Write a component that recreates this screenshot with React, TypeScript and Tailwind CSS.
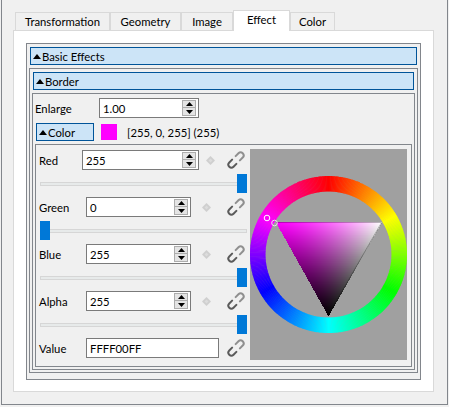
import React from 'react';

const tabs = [
  {label: 'Transformation', width: 'w-[95px]'},
  {label: 'Geometry', width: 'w-[71px]'},
  {label: 'Image', width: 'w-[52px]'},
  {label: 'Effect', width: 'w-[57px]', active: true},
  {label: 'Color', width: 'w-[45px]'},
];

const Arrow = (): React.JSX.Element => (
  <svg width="8" height="5" viewBox="0 0 8 5" className="shrink-0">
    <polygon points="4,0 8,5 0,5" fill="#000" />
  </svg>
);

const Header = ({label, className}: {label: string; className: string}): React.JSX.Element => (
  <div className={`flex h-[18px] items-center gap-[1px] border border-[#005499] bg-[#cce4f7] pl-[2px] ${className}`}>
    <Arrow />
    <span className="pt-[2px]">{label}</span>
  </div>
);

const Spin = (): React.JSX.Element => (
  <div className="flex h-[16px] w-[14px] shrink-0 flex-col border border-[#adadad] bg-[#e4e4e4]">
    <div className="flex h-[7px] items-center justify-center border-b border-[#adadad]">
      <svg width="7" height="4" viewBox="0 0 7 4">
        <polygon points="3.5,0 7,4 0,4" fill="#000" />
      </svg>
    </div>
    <div className="flex grow items-center justify-center">
      <svg width="7" height="4" viewBox="0 0 7 4">
        <polygon points="0,0 7,0 3.5,4" fill="#000" />
      </svg>
    </div>
  </div>
);

const SpinInput = ({value, width}: {value: string; width: string}): React.JSX.Element => (
  <div className={`flex h-[20px] shrink-0 items-center justify-between border border-[#7a7a7a] bg-white pr-[2px] pl-[3px] ${width}`}>
    <span className="pt-px">{value}</span>
    <Spin />
  </div>
);

const Diamond = ({className}: {className: string}): React.JSX.Element => (
  <svg width="9" height="9" viewBox="0 0 9 9" className={`shrink-0 ${className}`}>
    <polygon points="4.5,0 9,4.5 4.5,9 0,4.5" fill="#cfcfcf" />
    <polygon points="4.5,2.5 6.5,4.5 4.5,6.5 2.5,4.5" fill="#dcdcdc" />
  </svg>
);

const LinkIcon = (): React.JSX.Element => (
  <svg width="18" height="18" viewBox="0 0 18 18" fill="none" strokeWidth="2" strokeLinecap="round" className="mr-[3px] ml-auto shrink-0">
    <g transform="rotate(-45 9 9)">
      <path d="M6.5 6 H2.5 a3 3 0 0 0 0 6 H6.5" stroke="#5a5a5a" />
      <path d="M11.5 6 H15.5 a3 3 0 0 1 0 6 H11.5" stroke="#8f8f8f" />
    </g>
  </svg>
);

const Slider = ({right}: {right?: boolean}): React.JSX.Element => (
  <div className={`relative mt-[4px] ml-[4px] flex h-[19px] w-[207px] items-center ${right ? 'justify-end' : 'justify-start'}`}>
    <div className="h-[4px] w-full border border-[#d6d6d6] bg-[#e7eaea]" />
    <div className="absolute h-[19px] w-[10px] bg-[#0078d7]" />
  </div>
);

const Row = ({label, value, first}: {label: string; value: string; first?: boolean}): React.JSX.Element => (
  <div className="flex h-[20px] items-center pl-[3px]">
    <span className={first ? 'w-[43px] shrink-0 pt-px' : 'w-[47px] shrink-0 pt-px'}>{label}</span>
    <SpinInput value={value} width={first ? 'w-[117px]' : 'w-[105px]'} />
    <Diamond className={first ? 'ml-[7px]' : 'ml-[11px]'} />
    <LinkIcon />
  </div>
);

const arcPath = (start: number, end: number, r: number): string => {
  const cx = 78.5;
  const cy = 105.5;
  const a = ((start - 90) * Math.PI) / 180;
  const b = ((end - 90) * Math.PI) / 180;
  return `M${cx + r * Math.cos(a)} ${cy + r * Math.sin(a)} A${r} ${r} 0 0 1 ${cx + r * Math.cos(b)} ${cy + r * Math.sin(b)}`;
};

const hue = Array.from({length: 360}, (_, i) => i);

// triangle pixels: magenta top left, white top right, black at the bottom
const triCells: {x: number; y: number; fill: string}[] = [];
for (let row = 0; row < 94; row++) {
  const t = row / 93;
  const left = Math.round(26 + 52 * t);
  const right = Math.round(131 - 53 * t);
  const k = 255 * Math.pow(1 - t, 1.15);
  for (let x = left; x <= right; x++) {
    const s = right > left ? (x - left) / (right - left) : 0;
    const g = Math.round(k * Math.pow(s, 1.35));
    const v = Math.round(k);
    triCells.push({x, y: 73 + row, fill: `rgb(${v},${g},${v})`});
  }
}

const ColorWheel = (): React.JSX.Element => (
  <div className="mt-[4px] h-[211px] w-[157px] shrink-0 bg-[#a0a0a0]">
    <svg width="157" height="211" viewBox="0 0 157 211">
      {hue.map((h) => (
        <path key={h} d={arcPath(h - 0.7, h + 0.7, 70.75)} stroke={`hsl(${h} 100% 50%)`} strokeWidth="15.5" fill="none" />
      ))}
      <g shapeRendering="crispEdges">
        {triCells.map((c) => (
          <rect key={`${c.x}-${c.y}`} x={c.x} y={c.y} width="1" height="1" fill={c.fill} />
        ))}
      </g>
      <path d="M26 73.5 H131.5 L78 167" fill="none" stroke="#000" strokeOpacity="0.35" strokeWidth="0.8" />
      <circle cx="17" cy="69" r="2.8" fill="none" stroke="#fff" strokeWidth="1" />
      <circle cx="24.5" cy="74" r="2.8" fill="none" stroke="#e8e8e8" strokeWidth="1" />
    </svg>
  </div>
);

export default function App(): React.JSX.Element {
  return (
    <div className="h-[407px] w-[449px] bg-[#f0f0f0] font-['Lato',sans-serif] text-[11.3px] leading-none text-black">
      <div className="ml-px h-[405px] w-[447px] border-x border-b border-[#82868c] pt-[10px] pr-[13px] pl-[11px]">
        {/* Tabs */}
        <div className="relative z-10 -mb-px flex h-[21px] items-end pl-[2px]">
          {tabs.map((tab) => (
            <div
              key={tab.label}
              className={
                tab.active
                  ? `flex h-[21px] shrink-0 items-center justify-center border-x border-t border-[#d9d9d9] bg-white pb-[2px] ${tab.width}`
                  : `mb-px flex h-[18px] shrink-0 items-center justify-center border-x border-t border-[#d9d9d9] bg-[#f0f0f0] pt-px ${tab.width}`
              }>
              {tab.label}
            </div>
          ))}
        </div>

        <div className="h-[362px] border border-[#d9d9d9] bg-white pt-[12px] pr-[12px] pl-[12px]">
          {/* Basic Effects */}
          <div className="border border-[#82868c] bg-[#f0f0f0] pt-[3px] pb-[6px]">
            <Header label="Basic Effects" className="mx-[3px]" />
            <div className="mx-[2px] mt-[3px] border border-[#82868c] pt-[3px] pb-[2px]">
              <Header label="Border" className="mx-[3px]" />
              <div className="mx-[2px] mt-[3px] border border-[#82868c] pt-[4px] pb-[2px]">
                <div className="flex h-[20px] items-center pl-[2px]">
                  <span className="w-[64px] shrink-0 pt-px">Enlarge</span>
                  <SpinInput value="1.00" width="w-[100px]" />
                </div>
                <div className="mt-[5px] flex h-[18px] items-center pl-[3px]">
                  <Header label="Color" className="w-[58px]" />
                  <div className="ml-[7px] h-[16px] w-[16px] bg-[#ff00ff]" />
                  <span className="ml-[10px] pt-px">[255, 0, 255] (255)</span>
                </div>
                {/* Color frame */}
                <div className="mx-[2px] mt-[3px] flex gap-[2px] border border-[#82868c] pb-[6px]">
                  <div className="w-[212px] shrink-0 pt-[5px]">
                    <Row label="Red" value="255" first />
                    <Slider right />
                    <div className="mt-[4px]">
                      <Row label="Green" value="0" />
                    </div>
                    <Slider />
                    <div className="mt-[4px]">
                      <Row label="Blue" value="255" />
                    </div>
                    <Slider right />
                    <div className="mt-[4px]">
                      <Row label="Alpha" value="255" />
                    </div>
                    <Slider right />
                    <div className="mt-[4px] flex h-[20px] items-center pl-[3px]">
                      <span className="w-[47px] shrink-0 pt-px">Value</span>
                      <div className="flex h-[20px] w-[133px] shrink-0 items-center border border-[#7a7a7a] bg-white pt-px pl-[3px]">
                        FFFF00FF
                      </div>
                      <LinkIcon />
                    </div>
                  </div>
                  <ColorWheel />
                </div>
              </div>
            </div>
          </div>
        </div>
      </div>
    </div>
  );
}
